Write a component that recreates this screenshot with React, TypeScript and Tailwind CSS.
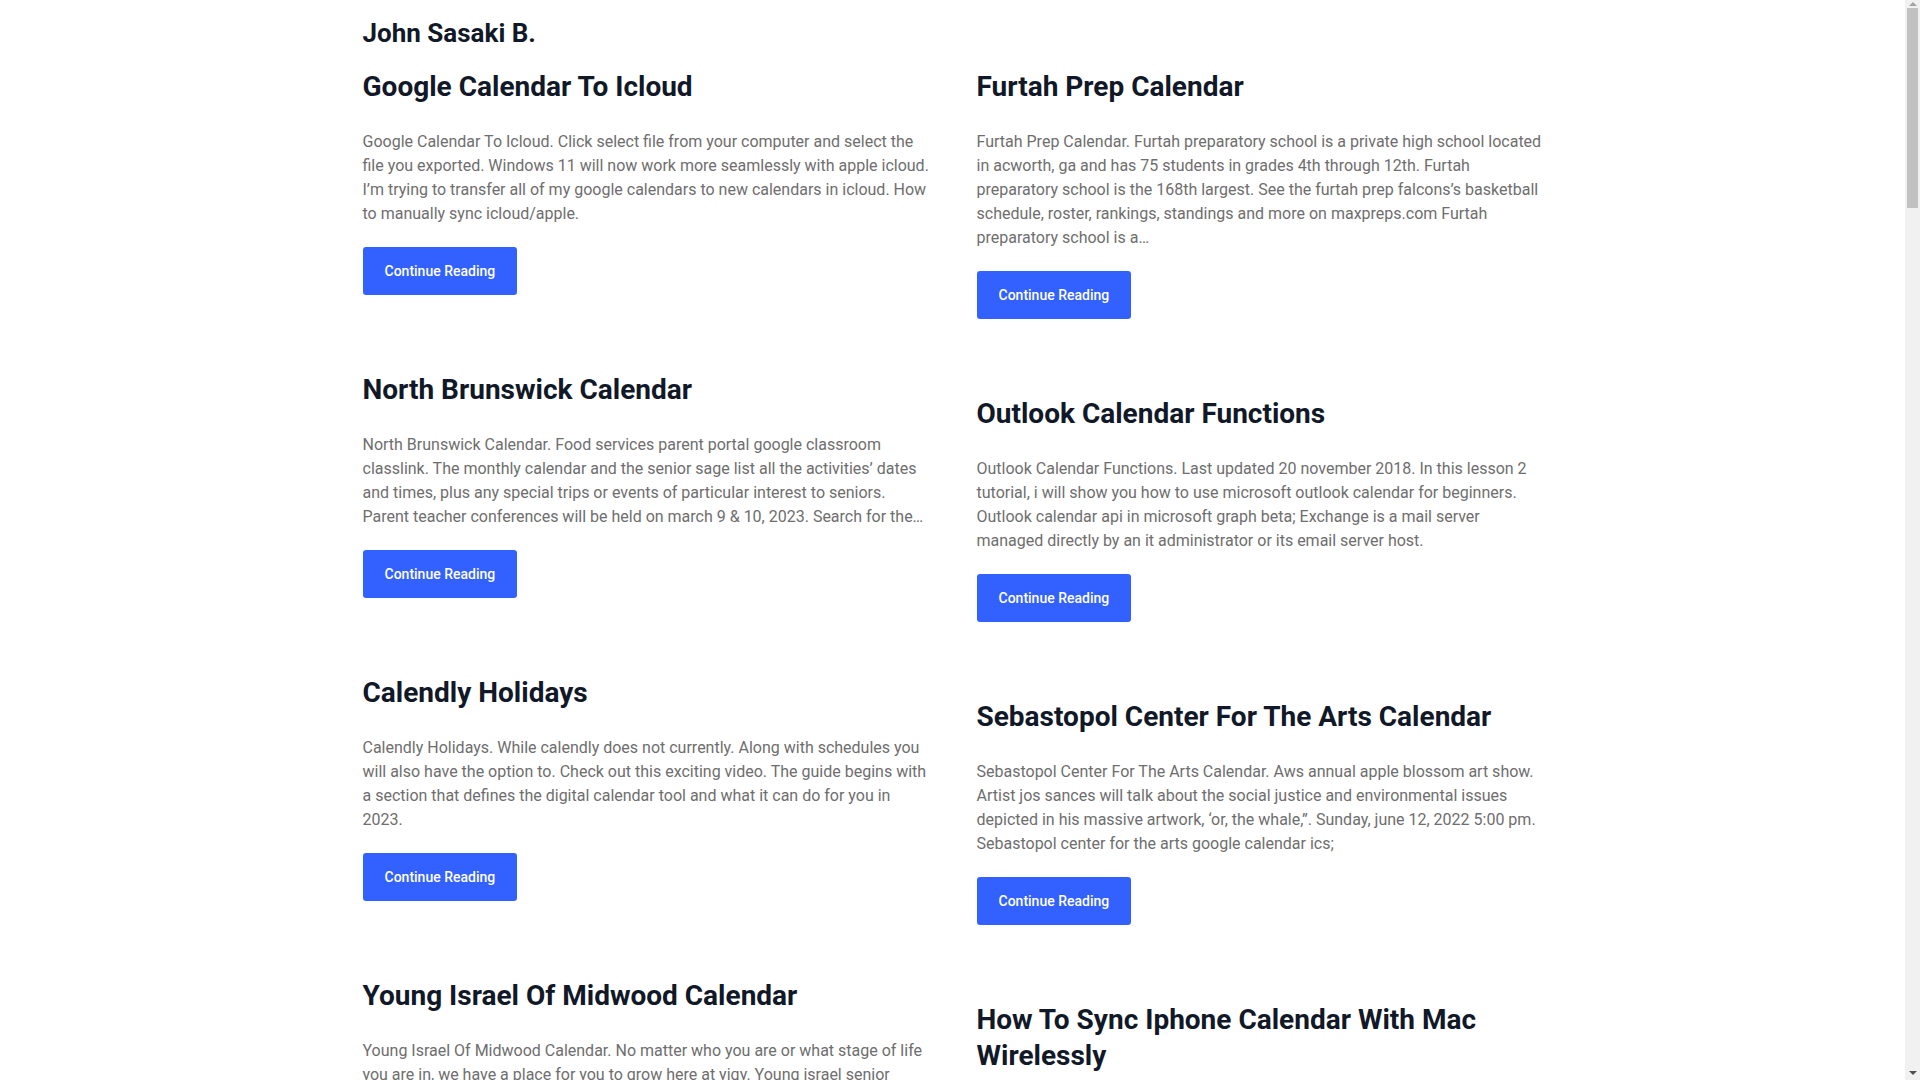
import React from 'react';

type Post = { title: string; excerpt: string };

const leftPosts: Post[] = [
  {
    title: 'Google Calendar To Icloud',
    excerpt:
      'Google Calendar To Icloud. Click select file from your computer and select the file you exported. Windows 11 will now work more seamlessly with apple icloud. I\u2019m trying to transfer all of my google calendars to new calendars in icloud. How to manually sync icloud/apple.',
  },
  {
    title: 'North Brunswick Calendar',
    excerpt:
      'North Brunswick Calendar. Food services parent portal google classroom classlink. The monthly calendar and the senior sage list all the activities\u2019 dates and times, plus any special trips or events of particular interest to seniors. Parent teacher conferences will be held on march 9 & 10, 2023. Search for the\u2026',
  },
  {
    title: 'Calendly Holidays',
    excerpt:
      'Calendly Holidays. While calendly does not currently. Along with schedules you will also have the option to. Check out this exciting video. The guide begins with a section that defines the digital calendar tool and what it can do for you in 2023.',
  },
  {
    title: 'Young Israel Of Midwood Calendar',
    excerpt:
      'Young Israel Of Midwood Calendar. No matter who you are or what stage of life you are in, we have a place for you to grow here at yiqy. Young israel senior programs, classes and minyanim are listed on our weekly calendar for all members\u2026',
  },
];

const rightPosts: Post[] = [
  {
    title: 'Furtah Prep Calendar',
    excerpt:
      'Furtah Prep Calendar. Furtah preparatory school is a private high school located in acworth, ga and has 75 students in grades 4th through 12th. Furtah preparatory school is the 168th largest. See the furtah prep falcons\u2019s basketball schedule, roster, rankings, standings and more on maxpreps.com Furtah preparatory school is a\u2026',
  },
  {
    title: 'Outlook Calendar Functions',
    excerpt:
      'Outlook Calendar Functions. Last updated 20 november 2018. In this lesson 2 tutorial, i will show you how to use microsoft outlook calendar for beginners. Outlook calendar api in microsoft graph beta; Exchange is a mail server managed directly by an it administrator or its email server host.',
  },
  {
    title: 'Sebastopol Center For The Arts Calendar',
    excerpt:
      'Sebastopol Center For The Arts Calendar. Aws annual apple blossom art show. Artist jos sances will talk about the social justice and environmental issues depicted in his massive artwork, \u2018or, the whale,\u201d. Sunday, june 12, 2022 5:00 pm. Sebastopol center for the arts google calendar ics;',
  },
  {
    title: 'How To Sync Iphone Calendar With Mac Wirelessly',
    excerpt:
      'How To Sync Iphone Calendar With Mac Wirelessly. Make sure both devices are signed in with the same apple id. Open settings on your iphone and turn on calendars in icloud, then open calendar on your mac\u2026',
  },
];

const PostCard: React.FC<{ post: Post }> = ({ post }) => (
  <article className="flex flex-col items-start">
    <h2 className="text-[28px] leading-[36px] font-bold text-[#111827]">{post.title}</h2>
    <p className="mt-[25px] text-[16px] leading-[24px] text-[#6e6e6e]">{post.excerpt}</p>
    <a
      href="#"
      className="mt-[21px] h-[48px] px-[22px] flex items-center rounded-[3px] bg-[#3361ff] text-[14px] font-medium text-white"
    >
      Continue Reading
    </a>
  </article>
);

// Classic browser scrollbar as seen in the screenshot
const FakeScrollbar = () => (
  <div aria-hidden className="fixed top-0 right-0 h-screen w-[15px] bg-[#f1f1f1] flex flex-col items-center">
    <div className="h-[7px] flex items-center justify-center">
      <div className="w-0 h-0 border-x-[4px] border-x-transparent border-b-[4px] border-b-[#a3a3a3]" />
    </div>
    <div className="mt-[1px] h-[200px] w-[11px] bg-[#c1c1c1]" />
    <div className="flex-1" />
    <div className="h-[9px] flex items-start justify-center">
      <div className="w-0 h-0 border-x-[4px] border-x-transparent border-t-[4px] border-t-[#505050]" />
    </div>
  </div>
);

export default function App() {
  return (
    <div className="min-h-screen bg-white pr-[15px] font-['Roboto',sans-serif]">
      <div className="mx-auto w-[1180px] pb-[80px]">
        {/* Site title */}
        <header className="pt-[17px]">
          <h1 className="text-[26px] leading-[32px] font-bold text-[#111827]">John Sasaki B.</h1>
        </header>

        {/* Posts */}
        <main className="mt-[20px] grid grid-cols-[568px_568px] gap-x-[46px] items-start">
          <div className="flex flex-col gap-[77px]">
            {leftPosts.map((p) => (
              <PostCard key={p.title} post={p} />
            ))}
          </div>
          <div className="flex flex-col gap-[77px]">
            {rightPosts.map((p) => (
              <PostCard key={p.title} post={p} />
            ))}
          </div>
        </main>
      </div>
      <FakeScrollbar />
    </div>
  );
}
